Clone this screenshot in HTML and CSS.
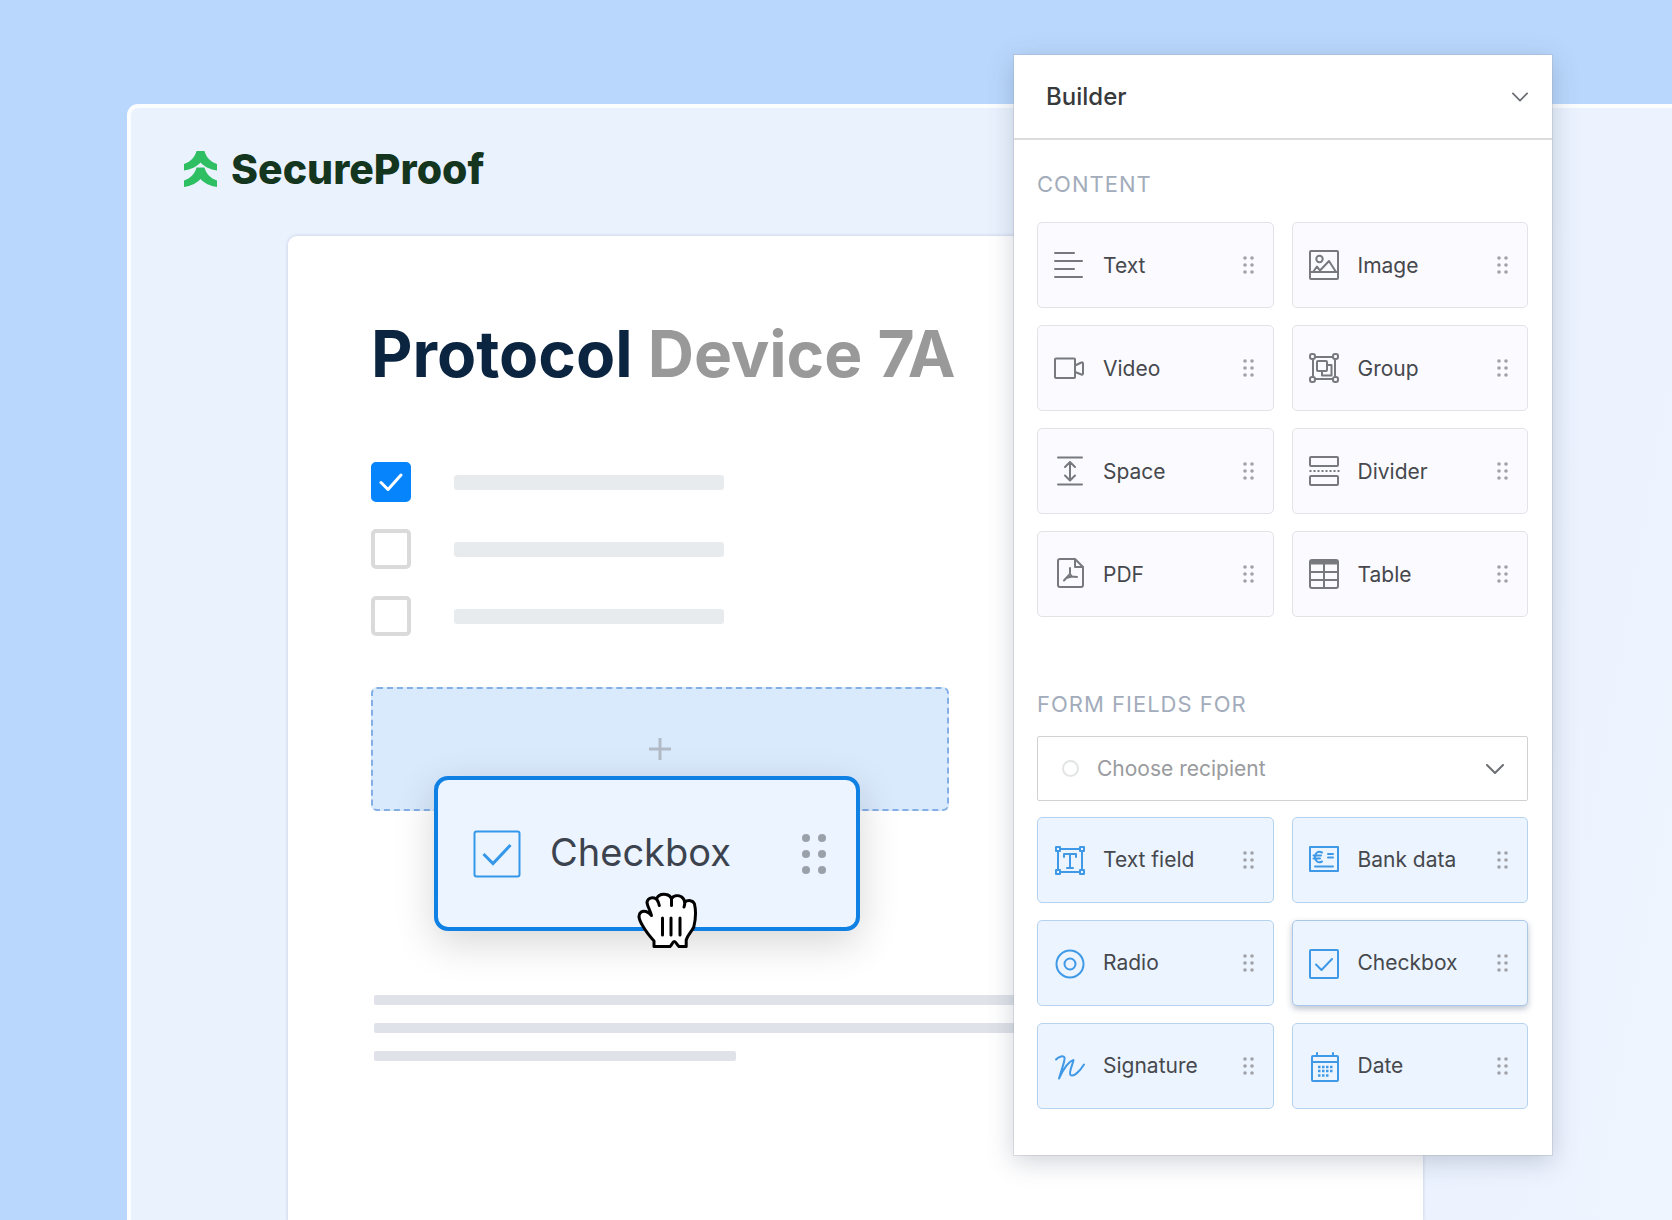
FILE: index.html
```html
<!DOCTYPE html>
<html lang="en">
<head>
    <meta charset="utf-8">
    <meta name="viewport" content="width=device-width, initial-scale=1">
    <title>SecureProof Builder</title>
    <link rel="stylesheet" href="styles.css">
</head>
<body>

<!-- shared icons -->
<svg class="sprite" width="0" height="0" aria-hidden="true">
    <symbol id="grip" viewBox="0 0 12 18">
        <g fill="currentColor">
            <circle cx="2" cy="2" r="1.800"/><circle cx="9" cy="2" r="1.800"/>
            <circle cx="2" cy="9" r="1.800"/><circle cx="9" cy="9" r="1.800"/>
            <circle cx="2" cy="16" r="1.800"/><circle cx="9" cy="16" r="1.800"/>
        </g>
    </symbol>
    <symbol id="chevron" viewBox="0 0 18 10">
        <path d="M1 1l8 8 8-8" fill="none" stroke="currentColor" stroke-width="2" stroke-linecap="round" stroke-linejoin="round"/>
    </symbol>
</svg>

<div class="stage">
    <div class="app">
        <header class="app-header">
            <svg class="logo-mark" viewBox="0 0 33 36" aria-hidden="true">
                <path fill="#2fbf63" d="M12.500 0h8c1.500 6 6 11 12.500 13v6.500C26 18.500 20 15.500 16.500 11.500C13 15.500 7 18.500 0 19.500V13C6.500 11 11 6 12.500 0z"/>
                <path fill="#2fbf63" d="M12.500 16.500h8c1.500 6 6 11 12.500 13V36C26 35 20 32 16.500 28C13 32 7 35 0 36v-6.500c6.500-2 11-7 12.500-13z"/>
            </svg>
            <span class="logo-text">SecureProof</span>
        </header>

        <main class="paper">
            <h1 class="title">Protocol <span>Device 7A</span></h1>

            <!-- checklist -->
            <div class="checklist">
                <label class="check-row">
                    <span class="check">
                        <input type="checkbox" aria-label="Item 1" checked>
                        <svg viewBox="0 0 24 18" aria-hidden="true"><path d="M2 9.500l7 7L22 2"/></svg>
                    </span>
                    <span class="bar"></span>
                </label>
                <label class="check-row">
                    <span class="check">
                        <input type="checkbox" aria-label="Item 2">
                        <svg viewBox="0 0 24 18" aria-hidden="true"><path d="M2 9.500l7 7L22 2"/></svg>
                    </span>
                    <span class="bar"></span>
                </label>
                <label class="check-row">
                    <span class="check">
                        <input type="checkbox" aria-label="Item 3">
                        <svg viewBox="0 0 24 18" aria-hidden="true"><path d="M2 9.500l7 7L22 2"/></svg>
                    </span>
                    <span class="bar"></span>
                </label>
            </div>

            <!-- drop target with the dragged field on top -->
            <div class="dropzone">
                <svg class="plus" viewBox="0 0 24 24" aria-hidden="true"><path d="M12 1v22M1 12h22"/></svg>
                <div class="dragged">
                    <svg class="dragged-icon" viewBox="0 0 48 48" aria-hidden="true">
                        <rect x="1.500" y="1.500" width="45" height="45" rx="2"/>
                        <path d="M10.500 24l9.500 9.500L37.500 15" stroke-width="3"/>
                    </svg>
                    <span>Checkbox</span>
                    <svg class="dragged-grip" viewBox="0 0 26 42" aria-hidden="true">
                        <circle cx="5" cy="5" r="4"/><circle cx="21" cy="5" r="4"/>
                        <circle cx="5" cy="21" r="4"/><circle cx="21" cy="21" r="4"/>
                        <circle cx="5" cy="37" r="4"/><circle cx="21" cy="37" r="4"/>
                    </svg>
                    <svg class="hand" viewBox="0 0 62 56" aria-hidden="true">
                        <path fill="#fff" d="M18 54.500V49C14.500 45 11.500 41.500 9 37.500C6 33 3.500 29 3 25C2.700 20.500 6 18.500 10 19.500C12.500 20.200 14 21.500 15.500 23.500C14.500 18.500 11 14 11 10C12 6 16 4.500 20.500 7C22 3 26 2 30 2.500C33 3 34.500 4.500 35.500 6.500C38 3.500 42 3 45 4.500C47.500 6 48.300 7.500 48.800 10C52 7.800 57 8 58.500 12C60.300 20 59.500 28 57.800 35C55.500 40 51.500 43 50.200 48V54.500H43C40.500 52.500 40 49.500 38.300 49.500S36 53 34 54.500z"/>
                        <path fill="none" d="M20.500 7C22 9 22.800 11 23.300 13.500M35.500 6.500V13.500M48.800 10C48.900 12 48.600 13.500 48 15"/>
                        <path fill="none" d="M26.500 26v17M35 26v17M44 26v17"/>
                    </svg>
                </div>
            </div>

            <div class="lines">
                <span></span>
                <span></span>
                <span class="short"></span>
            </div>
        </main>
    </div>

    <aside class="panel">
        <button type="button" class="panel-header">
            Builder
            <svg class="chevron small"><use href="#chevron"/></svg>
        </button>

        <div class="panel-body">
            <h2>CONTENT</h2>
            <div class="cards">
                <button type="button" class="card">
                    <svg class="icon" viewBox="0 0 30 30"><path d="M1 3h19M1 11h27M1 19h19M1 27h27"/></svg>
                    <span>Text</span>
                    <svg class="grip"><use href="#grip"/></svg>
                </button>
                <button type="button" class="card">
                    <svg class="icon" viewBox="0 0 30 30"><rect x="1" y="1" width="28" height="28" rx="1"/><circle cx="10.500" cy="9" r="3.200"/><path d="M1 22h28M4 22l4-5.500 4 5.500M11 20.500l9-9.500 7 11"/></svg>
                    <span>Image</span>
                    <svg class="grip"><use href="#grip"/></svg>
                </button>
                <button type="button" class="card">
                    <svg class="icon" viewBox="0 0 30 30"><rect x="1" y="5.500" width="20" height="19.500" rx="1"/><path d="M21 12.500l6.500-3q1.500-.5 1.500 1v10q0 1.500-1.500 1L21 19"/></svg>
                    <span>Video</span>
                    <svg class="grip"><use href="#grip"/></svg>
                </button>
                <button type="button" class="card">
                    <svg class="icon" viewBox="0 0 30 30"><path d="M6 4h18M26 6v18M24 26H6M4 24V6"/><rect x="1" y="1" width="5" height="5" rx="2"/><rect x="24" y="1" width="5" height="5" rx="2"/><rect x="1" y="24" width="5" height="5" rx="2"/><rect x="24" y="24" width="5" height="5" rx="2"/><rect x="8" y="8" width="10" height="10" rx="1"/><path d="M18 12h4.500v10.500H13V18"/></svg>
                    <span>Group</span>
                    <svg class="grip"><use href="#grip"/></svg>
                </button>
                <button type="button" class="card">
                    <svg class="icon" viewBox="0 0 30 30"><path d="M4 1.500h24M4 28.500h24M16 6.500v17M11 11l5-5 5 5M11 19.500l5 5 5-5"/></svg>
                    <span>Space</span>
                    <svg class="grip"><use href="#grip"/></svg>
                </button>
                <button type="button" class="card">
                    <svg class="icon" viewBox="0 0 30 30"><rect x="1" y="1" width="28" height="9" rx="1"/><rect x="1" y="20" width="28" height="9" rx="1"/><path d="M.5 15h30" stroke-dasharray="2 2" stroke-linecap="butt"/></svg>
                    <span>Divider</span>
                    <svg class="grip"><use href="#grip"/></svg>
                </button>
                <button type="button" class="card">
                    <svg class="icon" viewBox="0 0 30 30"><path d="M6 0h15l8 8v18q0 2-2 2H6q-2 0-2-2V2q0-2 2-2zM21 0v8h8"/><path d="M16 9v6l-6 6.500M16 15l2 2.500 5 .5M12 19l6-1.500"/></svg>
                    <span>PDF</span>
                    <svg class="grip"><use href="#grip"/></svg>
                </button>
                <button type="button" class="card">
                    <svg class="icon" viewBox="0 0 30 30"><rect x="1" y="1" width="28" height="28" rx="2"/><path d="M1 3h28M15 5v24M1 13h28M1 21h28"/><path d="M2 3.500h26" stroke-width="4"/></svg>
                    <span>Table</span>
                    <svg class="grip"><use href="#grip"/></svg>
                </button>
            </div>

            <h2 class="fields-heading">FORM FIELDS FOR</h2>
            <div class="select">
                <span class="dot"></span>
                <select aria-label="Recipient">
                    <option>Choose recipient</option>
                </select>
                <svg class="chevron"><use href="#chevron"/></svg>
            </div>

            <div class="cards fields">
                <button type="button" class="card">
                    <svg class="icon" viewBox="0 0 30 30"><path d="M7 4h18M28 6v18M25 27H7M4 24V6"/><rect x="2" y="2" width="4" height="4"/><rect x="26" y="2" width="4" height="4"/><rect x="2" y="25" width="4" height="4"/><rect x="26" y="25" width="4" height="4"/><path d="M10 12V9h12v3M16 9v14M13 23h6"/></svg>
                    <span>Text field</span>
                    <svg class="grip"><use href="#grip"/></svg>
                </button>
                <button type="button" class="card">
                    <svg class="icon" viewBox="0 0 30 30"><rect x="1" y="2" width="28" height="24"/><path d="M13 7.500c-4-2-7 .5-7 4.500s3 6.500 7 4.500M4.500 10.500H12M4.500 13.500H11M19 9h5M19 12.500h5M6 21.500h18"/></svg>
                    <span>Bank data</span>
                    <svg class="grip"><use href="#grip"/></svg>
                </button>
                <button type="button" class="card">
                    <svg class="icon" viewBox="0 0 30 30"><circle cx="16" cy="16" r="13.500"/><circle cx="16" cy="16" r="5.500"/></svg>
                    <span>Radio</span>
                    <svg class="grip"><use href="#grip"/></svg>
                </button>
                <button type="button" class="card active">
                    <svg class="icon" viewBox="0 0 30 30"><rect x="1" y="2" width="28" height="28" rx="1"/><path d="M7 16.500l5.500 5.500L23 11"/></svg>
                    <span>Checkbox</span>
                    <svg class="grip"><use href="#grip"/></svg>
                </button>
                <button type="button" class="card">
                    <svg class="icon" viewBox="0 0 30 30"><path d="M2 8.500C5 5 9.500 4.500 10.500 6.500C11.500 9 7 20 5 27.500C8 21 14 10.500 19.500 9C19 13 14.500 21 16.500 24C19.500 26.500 26 20 30 13.500"/></svg>
                    <span>Signature</span>
                    <svg class="grip"><use href="#grip"/></svg>
                </button>
                <button type="button" class="card">
                    <svg class="icon" viewBox="0 0 30 30"><rect x="3" y="5" width="26" height="25" rx="1"/><path d="M3 11h26M8 2v3M24 2v3"/><path d="M9 16h16M9 20h16M9 24.500h12" stroke-dasharray="2.500 1.500" stroke-linecap="butt" stroke-width="2.500"/></svg>
                    <span>Date</span>
                    <svg class="grip"><use href="#grip"/></svg>
                </button>
            </div>
        </div>
    </aside>
</div>

</body>
</html>
```
FILE: styles.css
```css
/* General */
* {
    box-sizing: border-box;
}

body {
    margin: 0;
    font-family: Inter, "Liberation Sans", sans-serif;
    background-color: #b9d7fc;
    color: #46484d;
}

button,
select {
    font: inherit;
    color: inherit;
    cursor: pointer;
}

.sprite {
    position: absolute;
}

.stage {
    position: relative;
    display: flex;
    min-height: 100vh;
    padding: 104px 0 0 127px;
    overflow: hidden;
}

/* App window */
.app {
    flex: 1;
    display: flex;
    flex-direction: column;
    border: solid #fbfdff;
    border-width: 4px 0 0 4px;
    border-radius: 11px 0 0 0;
    background: linear-gradient(100deg, #eaf2fe 80%, #eff5ff);
}

.app-header {
    display: flex;
    align-items: center;
    gap: 14px;
    height: 128px;
    padding: 0 53px 6px;
}

.logo-mark {
    width: 33px;
    height: 36px;
}

.logo-text {
    font-size: 41px;
    font-weight: 800;
    color: #14361f;
}

/* Document */
.paper {
    flex: 1;
    margin: 0 249px 0 157px;
    padding: 82px 84px 0 83px;
    background-color: #fff;
    border-radius: 9px 9px 0 0;
    box-shadow: 0 0 3px 1px rgba(120, 130, 160, 0.2);
}

.title {
    margin: 0;
    font-size: 64px;
    line-height: 72px;
    font-weight: 700;
    color: #0b2440;
}

.title span {
    color: #999;
}

.checklist {
    display: flex;
    flex-direction: column;
    gap: 27px;
    margin-top: 72px;
}

.check-row {
    display: flex;
    align-items: center;
    gap: 43px;
}

.check {
    display: grid;
    place-items: center;
}

.check input,
.check svg {
    grid-area: 1 / 1;
}

.check input {
    appearance: none;
    width: 40px;
    height: 40px;
    margin: 0;
    border: 4px solid #dadada;
    border-radius: 5px;
    background-color: #fff;
}

.check input:checked {
    border-color: #0584fb;
    background-color: #0584fb;
}

.check svg {
    width: 24px;
    height: 18px;
    pointer-events: none;
    fill: none;
    stroke: #fff;
    stroke-width: 3;
    stroke-linecap: round;
    stroke-linejoin: round;
}

.bar {
    width: 270px;
    height: 15px;
    border-radius: 3px;
    background-color: #e8ebee;
}

/* Drop target */
.dropzone {
    position: relative;
    max-width: 578px;
    height: 124px;
    margin-top: 51px;
    padding-top: 48px;
    border: 2px dashed #83aee6;
    border-radius: 6px;
    background-color: #d9eafc;
    text-align: center;
}

.plus {
    width: 24px;
    height: 24px;
    stroke: #b1bac5;
    stroke-width: 3;
}

.dragged {
    position: absolute;
    top: 87px;
    left: 61px;
    display: flex;
    align-items: center;
    width: 426px;
    height: 155px;
    padding: 0 29px 0 35px;
    border: 4px solid #0f80e4;
    border-radius: 14px;
    background-color: #ebf4ff;
    box-shadow: 0 12px 40px rgba(0, 0, 0, 0.16);
    font-size: 38px;
    color: #3c434e;
}

.dragged span {
    flex: 1;
    margin-left: 29px;
    padding-bottom: 4px;
    text-align: left;
}

.dragged-icon {
    width: 48px;
    height: 48px;
    fill: none;
    stroke: #3497e9;
    stroke-width: 2;
}

.dragged-grip {
    width: 26px;
    height: 42px;
    fill: #9ba1a9;
}

.hand {
    position: absolute;
    top: 112px;
    left: 198px;
    width: 62px;
    height: 56px;
    stroke: #000;
    stroke-width: 3;
    stroke-linecap: round;
    stroke-linejoin: round;
}

.lines {
    display: flex;
    flex-direction: column;
    gap: 18px;
    margin-top: 184px;
    padding-left: 3px;
}

.lines span {
    height: 10px;
    border-radius: 2px;
    background-color: #dfe2e8;
}

.lines .short {
    width: 362px;
}

/* Builder panel */
.panel {
    position: absolute;
    top: 55px;
    right: 120px;
    width: 538px;
    background-color: #fff;
    box-shadow: 0 0 0 1px rgba(160, 165, 175, 0.3), 0 6px 24px rgba(60, 70, 100, 0.25);
}

.panel-header {
    display: flex;
    align-items: center;
    justify-content: space-between;
    width: 100%;
    height: 85px;
    padding: 0 24px 0 32px;
    border: none;
    border-bottom: 2px solid #dcdcdc;
    background-color: #fff;
    font-size: 24px;
    font-weight: 500;
    color: #38393b;
}

.chevron {
    width: 18px;
    height: 10px;
    color: #6c6f73;
    pointer-events: none;
}

.chevron.small {
    width: 16px;
}

.panel-body {
    padding: 30px 24px 46px 23px;
}

.panel-body h2 {
    margin: 0 0 24px;
    font-size: 22px;
    line-height: 28px;
    font-weight: 400;
    letter-spacing: 1px;
    color: #a2acbb;
}

.panel-body .fields-heading {
    margin: 73px 0 18px;
}

.cards {
    display: grid;
    grid-template-columns: 1fr 1fr;
    gap: 17px 18px;
}

.card {
    display: flex;
    align-items: center;
    height: 86px;
    padding: 0 18px 0 16px;
    border: 1px solid #e2e3e6;
    border-radius: 5px;
    background-color: #fafaff;
    font-size: 21px;
    text-align: left;
}

.card span {
    flex: 1;
    margin-left: 19px;
}

.icon {
    width: 30px;
    height: 30px;
    overflow: visible;
    fill: none;
    stroke: #77797f;
    stroke-width: 2;
    stroke-linecap: round;
    stroke-linejoin: round;
}

.grip {
    width: 12px;
    height: 18px;
    color: #a0a2a8;
}

.fields .card {
    border-color: #b5d3ef;
    background-color: #ebf4ff;
}

.fields .card span {
    padding-bottom: 2px;
}

.fields .icon {
    stroke: #4099e6;
}

.fields .active {
    border-color: #a9c8ea;
    box-shadow: 0 3px 6px rgba(40, 60, 100, 0.3);
}

/* Recipient drop-down */
.select {
    display: flex;
    align-items: center;
    height: 65px;
    margin-bottom: 16px;
    padding: 0 23px 0 24px;
    border: 1px solid #d2d2d2;
    border-radius: 2px;
}

.select .dot {
    width: 17px;
    height: 17px;
    border: 2px solid #e3e5e4;
    border-radius: 50%;
}

.select select {
    appearance: none;
    flex: 1;
    margin-left: 18px;
    padding: 0;
    border: none;
    background: none;
    font-size: 21px;
    color: #999b9e;
}
```
